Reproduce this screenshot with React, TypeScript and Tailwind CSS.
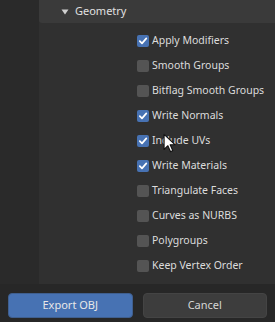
import React from "react";

const options = [
  { label: "Apply Modifiers", checked: true },
  { label: "Smooth Groups", checked: false },
  { label: "Bitflag Smooth Groups", checked: false },
  { label: "Write Normals", checked: true },
  { label: "Include UVs", checked: true },
  { label: "Write Materials", checked: true },
  { label: "Triangulate Faces", checked: false },
  { label: "Curves as NURBS", checked: false },
  { label: "Polygroups", checked: false },
  { label: "Keep Vertex Order", checked: false },
];

function Checkbox({ checked }: { checked: boolean }) {
  return (
    <div
      className={`flex h-[12px] w-[12px] items-center justify-center rounded-[2px] ${
        checked ? "bg-[#4772b3]" : "bg-[#545454]"
      }`}
    >
      {checked && (
        <svg width="10" height="10" viewBox="0 0 10 10" fill="none">
          <path d="M1.8 5.2 L4 7.4 L8.3 2.4" stroke="#ffffff" strokeWidth="1.7" strokeLinecap="round" strokeLinejoin="round" />
        </svg>
      )}
    </div>
  );
}

export default function App() {
  return (
    <div className="relative flex h-[322px] w-[275px] flex-col overflow-hidden bg-[#2b2b2b] font-['Noto_Sans',sans-serif] text-[10.5px] text-[#dcdcdc]">
      <div className="flex flex-1">
        <div className="w-[39px] bg-[#2a2a2a]" />
        <div className="flex flex-1 flex-col bg-[#303030]">
          {/* Panel header */}
          <div className="flex h-[23px] items-center rounded-bl-[3px] bg-[#3a3a3a] pl-[22px]">
            <svg width="8" height="8" viewBox="0 0 8 8" className="mr-[6px]">
              <path d="M0.5 1.5 H7.5 L4 6.5 Z" fill="#cfcfcf" />
            </svg>
            <span className="text-[11px] text-[#e0e0e0]">Geometry</span>
          </div>

          <div className="flex flex-col pt-[5px]">
            {options.map((o) => (
              <div key={o.label} className="flex h-[25px] items-center gap-[3px] pl-[98px]">
                <Checkbox checked={o.checked} />
                <span className="leading-none">{o.label}</span>
              </div>
            ))}
          </div>
        </div>
      </div>

      {/* Footer */}
      <div className="flex h-[38px] gap-[10px] bg-[#272727] px-[8px] pt-[9px] pb-[4px]">
        <button className="flex flex-1 items-center justify-center rounded-[4px] border border-[#3f5f8f] bg-[#4772b3] text-[11px] text-[#e8e8e8]">
          Export OBJ
        </button>
        <button className="flex flex-1 items-center justify-center rounded-[4px] border border-[#444444] bg-[#3d3d3d] text-[11px] text-[#d6d6d6]">
          Cancel
        </button>
      </div>

      {/* Mouse cursor */}
      <svg width="13" height="20" viewBox="0 0 12 18" className="absolute left-[163px] top-[133px]">
        <path d="M1 1 L1 15 L4.5 11.5 L7 17 L9 16 L6.6 10.6 L11 10.6 Z" fill="#ffffff" stroke="#111111" strokeWidth="1" strokeLinejoin="round" />
      </svg>
    </div>
  );
}
